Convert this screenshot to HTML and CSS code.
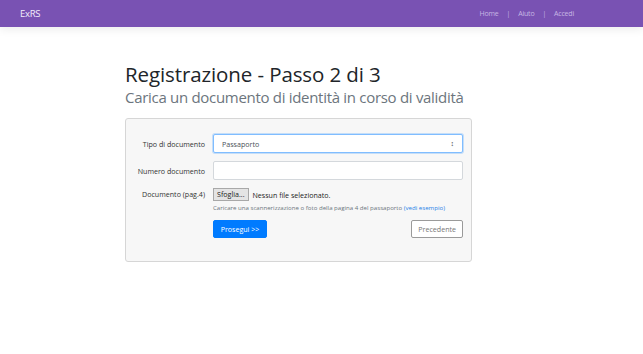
FILE: index.html
```html
<!DOCTYPE html>
<html lang="it">
<head>
  <meta charset="UTF-8">
  <title>ExRS - Registrazione</title>
  <link rel="stylesheet" href="styles.css">
</head>
<body>
  <header class="navbar">
    <div class="brand">ExRS</div>
    <nav class="links">
      <a href="#">Home</a>
      <span class="sep">|</span>
      <a href="#">Aiuto</a>
      <span class="sep">|</span>
      <a href="#">Accedi</a>
    </nav>
  </header>

  <main class="page">
    <h1>Registrazione - Passo 2 di 3</h1>
    <p class="lead">Carica un documento di identità in corso di validità</p>

    <form class="card">
      <div class="row">
        <label class="label">Tipo di documento</label>
        <div class="field">
          <div class="select focus">
            <span>Passaporto</span>
            <span class="arrows">&#8597;</span>
          </div>
        </div>
      </div>

      <div class="row">
        <label class="label">Numero documento</label>
        <div class="field">
          <div class="input"></div>
        </div>
      </div>

      <div class="row file-row">
        <label class="label">Documento (pag.4)</label>
        <div class="field">
          <div class="file">
            <span class="file-btn">Sfoglia...</span>
            <span>Nessun file selezionato.</span>
          </div>
          <small class="help">Caricare una scannerizzazione o foto della pagina 4 del passaporto <a href="#">(vedi esempio)</a></small>
        </div>
      </div>

      <div class="row actions">
        <div class="label"></div>
        <div class="field buttons">
          <button type="button" class="btn primary">Prosegui &gt;&gt;</button>
          <button type="button" class="btn outline">Precedente</button>
        </div>
      </div>
    </form>
  </main>
</body>
</html>
```

FILE: styles.css
```css
* {
  margin: 0;
  padding: 0;
  box-sizing: border-box;
}

body {
  font-family: 'Open Sans', sans-serif;
  background: #fff;
  color: #212529;
}

.navbar {
  height: 27px;
  background: #7952b3;
  display: flex;
  justify-content: space-between;
  align-items: center;
  padding: 0 69px 0 20px;
  box-shadow: 0 3px 9px rgba(0, 0, 0, 0.07);
}

.brand {
  color: #f3eefc;
  font-size: 9.5px;
  letter-spacing: -0.3px;
}

.links {
  display: flex;
  gap: 8px;
  font-size: 7px;
  letter-spacing: -0.2px;
}

.links a,
.links .sep {
  color: #c7b6e4;
  text-decoration: none;
}

.page {
  width: 347px;
  margin: 34px 0 0 125px;
}

h1 {
  font-weight: 400;
  font-size: 20.5px;
  line-height: 26px;
  letter-spacing: -0.1px;
  white-space: nowrap;
}

.lead {
  font-size: 15px;
  font-weight: 400;
  color: #6c757d;
  line-height: 20px;
  letter-spacing: -0.3px;
  white-space: nowrap;
}

.card {
  margin-top: 11px;
  background: #f7f7f7;
  border: 1px solid #d6d6d6;
  border-radius: 3px;
  padding: 15px 8px 23px 8px;
  display: flex;
  flex-direction: column;
  gap: 8px;
}

.row {
  display: flex;
  align-items: center;
}

.file-row {
  align-items: flex-start;
}

.label {
  width: 79px;
  padding-right: 8px;
  text-align: right;
  font-size: 7.1px;
  color: #333;
  white-space: nowrap;
}

.file-row .label {
  padding-top: 1px;
}

.field {
  flex: 1;
}

.select,
.input {
  height: 19px;
  background: #fff;
  border: 1px solid #d4d8dc;
  border-radius: 2px;
  display: flex;
  align-items: center;
  justify-content: space-between;
  padding: 0 8px;
  font-size: 7.1px;
  color: #495057;
}

.select.focus {
  border-color: #80bdff;
  box-shadow: 0 0 0 1px rgba(0, 123, 255, 0.2);
}

.arrows {
  font-size: 7px;
  color: #333;
}

.file {
  display: flex;
  align-items: center;
  gap: 4px;
  font-size: 7.1px;
  color: #222;
}

.file-btn {
  background: #e4e4e4;
  border: 1px solid #a8a8a8;
  padding: 1px 3px;
  line-height: 9px;
}

.help {
  display: block;
  margin-top: 2px;
  font-size: 6.1px;
  color: #6c757d;
  white-space: nowrap;
}

.help a {
  color: #1f7fe8;
  text-decoration: none;
}

.actions {
  margin-top: 0;
}

.buttons {
  display: flex;
  justify-content: space-between;
}

.btn {
  height: 18px;
  padding: 0 6px;
  font-family: 'Open Sans', sans-serif;
  font-size: 7.1px;
  border-radius: 2px;
  white-space: nowrap;
  cursor: pointer;
}

.btn.primary {
  min-width: 54px;
  background: #007bff;
  border: 1px solid #007bff;
  color: #fff;
}

.btn.outline {
  min-width: 49px;
  background: #fff;
  border: 1px solid #9a9a9a;
  color: #777;
}
```
